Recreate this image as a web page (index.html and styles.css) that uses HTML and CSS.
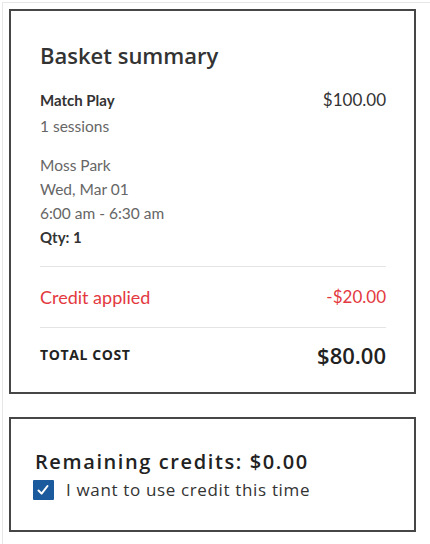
FILE: index.html
```html
<!DOCTYPE html>
<html lang="en">
<head>
<meta charset="utf-8">
<title>Basket summary</title>
<link rel="stylesheet" href="styles.css">
</head>
<body>
<div class="page">
  <section class="card summary">
    <h2 class="title">Basket summary</h2>
    <div class="row item-head">
      <span class="item-name">Match Play</span>
      <span class="item-price">$100.00</span>
    </div>
    <div class="muted sessions">1 sessions</div>
    <div class="details">
      <div class="muted">Moss Park</div>
      <div class="muted">Wed, Mar 01</div>
      <div class="muted">6:00 am - 6:30 am</div>
      <div class="qty">Qty: 1</div>
    </div>
    <hr class="divider">
    <div class="row credit">
      <span class="credit-label">Credit applied</span>
      <span>-$20.00</span>
    </div>
    <hr class="divider">
    <div class="row total">
      <span class="total-label">TOTAL COST</span>
      <span class="total-value">$80.00</span>
    </div>
  </section>
  <section class="card credits">
    <h2 class="credits-title">Remaining credits: $0.00</h2>
    <label class="check-row">
      <span class="checkbox"><svg viewBox="0 0 20 20" width="20" height="20"><path d="M5.5 10.5 L8.6 13.6 L14.5 6" fill="none" stroke="#fff" stroke-width="2" stroke-linecap="round" stroke-linejoin="round"/></svg></span>
      <span class="check-text">I want to use credit this time</span>
    </label>
  </section>
</div>
</body>
</html>
```
FILE: styles.css
```css
html, body {
  margin: 0;
  padding: 0;
  background: #fff;
  overflow: hidden;
}
body {
  font-family: "Lato", "Open Sans", sans-serif;
  color: #333;
}
.page {
  box-sizing: border-box;
  margin: 2px 0 0 2px;
  border-top: 1px solid #e6e6e6;
  border-left: 1px solid #e6e6e6;
  padding: 6px 0 0 6px;
  min-height: calc(100vh - 2px);
}
.card {
  box-sizing: border-box;
  width: 407px;
  border: 2px solid #464646;
  background: #fff;
}
.summary {
  padding: 29px 28px 22px 29px;
  height: 385px;
}
.title {
  margin: 0 0 18px;
  font-family: "Open Sans", sans-serif;
  font-weight: 600;
  font-size: 22px;
  line-height: 30px;
  color: #333;
}
.row {
  display: flex;
  justify-content: space-between;
  align-items: center;
}
.item-head {
  line-height: 24px;
}
.item-name {
  font-size: 15px;
  font-weight: 700;
  color: #333;
}
.item-price {
  font-size: 17px;
  color: #333;
}
.muted {
  font-size: 15.5px;
  line-height: 24px;
  color: #666;
}
.sessions {
  margin-top: 2px;
}
.details {
  margin-top: 15px;
}
.qty {
  font-size: 15px;
  line-height: 24px;
  font-weight: 700;
  color: #333;
}
.divider {
  margin: 17px 0 0;
  border: 0;
  border-top: 1px solid #e4e4e4;
  height: 0;
}
.credit {
  margin: 18px 0 18px;
  line-height: 24px;
  font-size: 17px;
  color: #e3393f;
}
.credit-label {
  font-size: 18px;
}
.total {
  margin-top: 13px;
  line-height: 28px;
}
.total-label {
  font-family: "Open Sans", sans-serif;
  font-size: 14px;
  font-weight: 700;
  letter-spacing: 0.6px;
  color: #222;
}
.total-value {
  font-family: "Open Sans", sans-serif;
  font-size: 22px;
  font-weight: 600;
  color: #222;
}
.credits {
  margin-top: 23px;
  padding: 29px 22px 27px 22px;
  height: 115px;
}
.credits-title {
  margin: 0;
  font-family: "Open Sans", sans-serif;
  font-size: 20px;
  font-weight: 600;
  line-height: 28px;
  letter-spacing: 1.6px;
  color: #222;
  padding-left: 2px;
}
.check-row {
  display: flex;
  align-items: center;
  gap: 12px;
  line-height: 24px;
  margin-top: 2px;
}
.checkbox {
  display: flex;
  width: 21px;
  height: 20px;
  background: #1b5a9c;
  border-radius: 1px;
}
.check-text {
  font-family: "Open Sans", sans-serif;
  font-size: 17px;
  color: #333;
  letter-spacing: 0.65px;
}
```
